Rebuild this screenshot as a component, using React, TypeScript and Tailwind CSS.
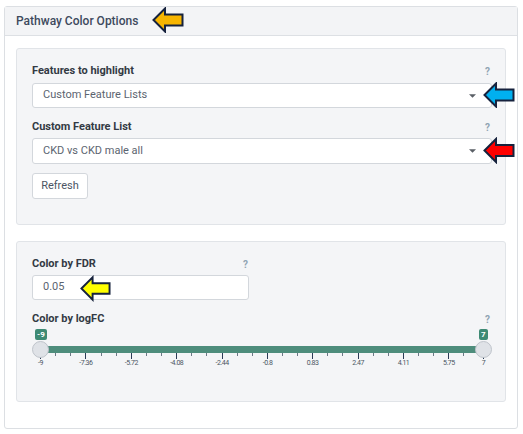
import React from "react";

const font = { fontFamily: 'Roboto, "Open Sans", sans-serif' };

function Arrow({ fill, className }: { fill: string; className: string }) {
  return (
    <svg viewBox="0 0 32 26" className={className}>
      <path
        d="M1.5 13 L13 1.5 L13 7.5 L30.5 7.5 L30.5 18.5 L13 18.5 L13 24.5 Z"
        fill={fill}
        stroke="#16223d"
        strokeWidth="2"
        strokeLinejoin="miter"
      />
    </svg>
  );
}

function Help() {
  return <span className="text-[10px] font-bold text-[#8fa3b3] leading-none">?</span>;
}

function Caret() {
  return (
    <svg viewBox="0 0 8 4" className="w-[7px] h-[4px]">
      <path d="M0 0 L8 0 L4 4 Z" fill="#5a5f66" />
    </svg>
  );
}

const majors = [-9, -7.36, -5.72, -4.08, -2.44, -0.8, 0.83, 2.47, 4.11, 5.75, 7];

function Slider() {
  const x0 = 8;
  const x1 = 451;
  const pos = (v: number) => x0 + ((v + 9) / 16) * (x1 - x0);
  const minors: number[] = [];
  for (let i = 0; i < majors.length - 1; i++) {
    const a = pos(majors[i]);
    const step = 15.1;
    for (let k = 1; k < 3; k++) {
      const m = a + step * k;
      if (m < pos(majors[i + 1]) - 4) minors.push(m);
    }
  }
  return (
    <div className="relative h-[46px] w-full">
      <div className="absolute left-[8px] w-[443px] top-[19px] h-[7px] bg-[#4e8d7c]" />
      {majors.map((v) => (
        <div key={v}>
          <div
            className="absolute top-[26px] w-px h-[6px] bg-[#2a3b55]"
            style={{ left: pos(v) }}
          />
          <div
            className="absolute top-[33px] text-[7px] leading-none text-[#4b5563] tracking-[-0.5px] -translate-x-1/2"
            style={{ left: pos(v) + 0.5 }}
          >
            {String(v)}
          </div>
        </div>
      ))}
      {minors.map((m, i) => (
        <div
          key={i}
          className="absolute top-[26px] w-px h-[3px] bg-[#6b7785]"
          style={{ left: m }}
        />
      ))}
      <div className="absolute left-0 top-[14px] w-[17px] h-[17px] rounded-full bg-[#dfe2e7] border border-[#bfc4cb]" />
      <div className="absolute left-[443px] top-[14px] w-[17px] h-[17px] rounded-full bg-[#dfe2e7] border border-[#bfc4cb]" />
      <div className="absolute left-[3px] top-[2px] h-[11px] px-[2px] rounded-[2px] bg-[#3e8a74] text-white text-[8px] font-bold leading-[11px]">
        -9
      </div>
      <div className="absolute left-[447px] top-[2px] h-[11px] px-[2px] rounded-[2px] bg-[#3e8a74] text-white text-[8px] font-bold leading-[11px]">
        7
      </div>
    </div>
  );
}

export default function App() {
  return (
    <div className="relative w-[523px] h-[434px] bg-white pt-[6px] pl-[4px]" style={font}>
      <div className="w-[514px] h-[423px] border border-[#dcdfe3] rounded-[3px] flex flex-col">
        <div className="h-[29px] shrink-0 bg-[#f3f4f6] border-b border-[#dde0e4] flex items-center pl-[11px]">
          <span className="text-[12px] font-medium text-[#3d4a5d]">Pathway Color Options</span>
        </div>
        <div className="px-[11px] pt-[12px] flex flex-col gap-[16px]">
          <div className="h-[177px] bg-[#f4f5f7] border border-[#e1e4e8] rounded-[3px] pl-[15px] pr-[13px] pt-[15px] flex flex-col">
            <div className="flex items-center justify-between h-[15px] pr-[2px]">
              <span className="text-[11px] font-bold text-[#333a44]">Features to highlight</span>
              <Help />
            </div>
            <div className="mt-[4px] h-[25px] bg-white border border-[#d3d7dc] rounded-[3px] flex items-center justify-between pl-[10px] pr-[15px]">
              <span className="text-[11px] text-[#5b6470]">Custom Feature Lists</span>
              <Caret />
            </div>
            <div className="mt-[12px] flex items-center justify-between h-[15px] pr-[2px]">
              <span className="text-[11px] font-bold text-[#333a44]">Custom Feature List</span>
              <Help />
            </div>
            <div className="mt-[3px] h-[26px] bg-white border border-[#d3d7dc] rounded-[3px] flex items-center justify-between pl-[10px] pr-[15px]">
              <span className="text-[11px] text-[#5b6470]">CKD vs CKD male all</span>
              <Caret />
            </div>
            <div className="mt-[9px] w-[56px] h-[26px] bg-white border border-[#d3d7dc] rounded-[3px] flex items-center justify-center">
              <span className="text-[11px] text-[#4b5563]">Refresh</span>
            </div>
          </div>
          <div className="h-[161px] bg-[#f4f5f7] border border-[#e1e4e8] rounded-[3px] pl-[15px] pr-[13px] pt-[15px] flex flex-col">
            <div className="w-[217px] flex items-center justify-between h-[15px] pr-[1px]">
              <span className="text-[11px] font-bold text-[#333a44]">Color by FDR</span>
              <Help />
            </div>
            <div className="mt-[3px] w-[217px] h-[25px] bg-white border border-[#d3d7dc] rounded-[3px] flex items-center pl-[10px]">
              <span className="text-[11px] text-[#5b6470]">0.05</span>
            </div>
            <div className="mt-[12px] flex items-center justify-between h-[15px] pr-[2px]">
              <span className="text-[11px] font-bold text-[#333a44]">Color by logFC</span>
              <Help />
            </div>
            <Slider />
          </div>
        </div>
      </div>
      <Arrow fill="#f7b500" className="absolute left-[152px] top-[7px] w-[32px] h-[26px]" />
      <Arrow fill="#00b0f0" className="absolute left-[483px] top-[82px] w-[32px] h-[26px]" />
      <Arrow fill="#ff0000" className="absolute left-[483px] top-[137px] w-[32px] h-[27px]" />
      <Arrow fill="#ffff00" className="absolute left-[80px] top-[275px] w-[31px] h-[27px]" />
    </div>
  );
}
